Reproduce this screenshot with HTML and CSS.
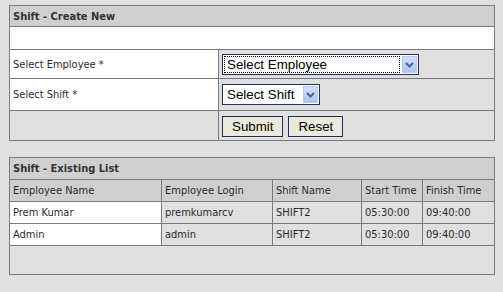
FILE: index.html
```html
<!DOCTYPE html>
<html lang="en">
<head>
<meta charset="utf-8">
<title>Shift</title>
<link rel="stylesheet" href="styles.css">
</head>
<body>
<section class="panel panel-create">
  <div class="panel-title">Shift - Create New</div>
  <div class="blank-row"></div>
  <div class="form-row row-employee">
    <div class="label">Select Employee *</div>
    <div class="field">
      <div class="combo combo-wide">
        <span class="combo-value"><span class="focus-box">Select Employee</span></span>
        <span class="combo-arrow"><svg width="9" height="6" viewBox="0 0 9 6"><path d="M1 1 L4.5 4.5 L8 1" fill="none" stroke="#4d6185" stroke-width="2"/></svg></span>
      </div>
    </div>
  </div>
  <div class="form-row row-shift">
    <div class="label">Select Shift *</div>
    <div class="field">
      <div class="combo combo-narrow">
        <span class="combo-value">Select Shift</span>
        <span class="combo-arrow"><svg width="9" height="6" viewBox="0 0 9 6"><path d="M1 1 L4.5 4.5 L8 1" fill="none" stroke="#4d6185" stroke-width="2"/></svg></span>
      </div>
    </div>
  </div>
  <div class="form-row row-actions">
    <div class="label label-empty"></div>
    <div class="field buttons">
      <button class="btn" type="button">Submit</button>
      <button class="btn" type="button">Reset</button>
    </div>
  </div>
</section>

<section class="panel panel-list">
  <div class="panel-title list-title">Shift - Existing List</div>
  <div class="list-row list-head">
    <div class="cell">Employee Name</div>
    <div class="cell">Employee Login</div>
    <div class="cell">Shift Name</div>
    <div class="cell">Start Time</div>
    <div class="cell">Finish Time</div>
  </div>
  <div class="list-row list-data">
    <div class="cell">Prem Kumar</div>
    <div class="cell">premkumarcv</div>
    <div class="cell">SHIFT2</div>
    <div class="cell">05:30:00</div>
    <div class="cell">09:40:00</div>
  </div>
  <div class="list-row list-data">
    <div class="cell">Admin</div>
    <div class="cell">admin</div>
    <div class="cell">SHIFT2</div>
    <div class="cell">05:30:00</div>
    <div class="cell">09:40:00</div>
  </div>
  <div class="list-foot"></div>
</section>
</body>
</html>
```

FILE: styles.css
```css
html, body {
  margin: 0;
  padding: 0;
}
body {
  background: #e0e0e0;
  padding: 5px 0 0 9px;
  font-family: "DejaVu Sans Condensed", "DejaVu Sans", sans-serif;
  font-stretch: condensed;
  font-size: 11px;
  color: #2b2b2b;
}
.panel {
  width: 486px;
  box-sizing: border-box;
  border: 1px solid #7a7a7a;
  background: #e0e0e0;
}
.panel-list {
  margin-top: 16px;
}
.panel-title {
  height: 20px;
  box-sizing: content-box;
  background: #cfcfcf;
  border-bottom: 1px solid #7a7a7a;
  font-weight: bold;
  padding-left: 3px;
  display: flex;
  align-items: center;
  color: #333;
}
.list-title {
  height: 21px;
}
.blank-row {
  height: 22px;
  background: #fff;
  border-bottom: 1px solid #7a7a7a;
}
.form-row {
  display: grid;
  grid-template-columns: 209px 1fr;
  border-bottom: 1px solid #7a7a7a;
}
.row-employee { height: 28px; }
.row-shift { height: 31px; }
.row-actions { height: 29px; border-bottom: 0; }
.label {
  background: #fff;
  border-right: 1px solid #7a7a7a;
  padding-left: 3px;
  display: flex;
  align-items: center;
}
.label-empty {
  background: #e0e0e0;
}
.field {
  display: flex;
  align-items: center;
  padding-left: 3px;
}
.row-employee .field { padding-top: 1px; }
.combo {
  display: inline-flex;
  height: 21px;
  box-sizing: border-box;
  border: 1px solid #1b2f63;
  background: #fff;
  font-family: "Liberation Sans", Arial, sans-serif;
  font-stretch: normal;
  font-size: 13.33px;
  color: #000;
}
.combo-wide { width: 197px; }
.combo-narrow { width: 98px; }
.combo-value {
  flex: 1;
  display: flex;
  align-items: center;
  padding: 1px;
  min-width: 0;
}
.focus-box {
  flex: 1;
  align-self: stretch;
  display: flex;
  align-items: center;
  padding-left: 3px;
  outline: 1px dotted #000;
  outline-offset: -1px;
}
.combo-narrow .combo-value {
  padding-left: 4px;
}
.combo-arrow {
  width: 15px;
  margin: 1px;
  box-sizing: border-box;
  border: 1px solid #b9c9f3;
  background: linear-gradient(#d2ddfb, #afc3f4);
  display: flex;
  align-items: center;
  justify-content: center;
}
.buttons {
  gap: 5px;
  padding-top: 1px;
}
.btn {
  height: 21px;
  box-sizing: border-box;
  border: 1px solid #1b2f63;
  border-radius: 0;
  background: #ece9d8;
  font-family: "Liberation Sans", Arial, sans-serif;
  font-size: 13.33px;
  color: #000;
  padding: 0 9px;
  margin: 0;
}
.list-row {
  display: grid;
  grid-template-columns: 152px 111px 89px 61px 1fr;
  height: 21px;
  border-bottom: 1px solid #7a7a7a;
}
.cell {
  border-right: 1px solid #7a7a7a;
  padding-left: 3px;
  display: flex;
  align-items: center;
  white-space: nowrap;
}
.cell:last-child {
  border-right: 0;
}
.list-head .cell {
  background: #cfcfcf;
}
.list-data .cell:first-child {
  background: #fff;
}
.list-foot {
  height: 28px;
}
```
